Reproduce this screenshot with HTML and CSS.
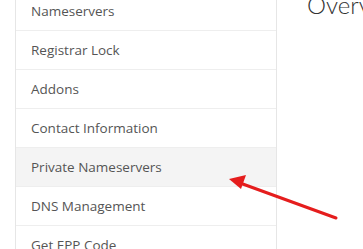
FILE: index.html
```html
<!DOCTYPE html>
<html lang="en">
<head>
  <meta charset="UTF-8" />
  <title>Domain Overview</title>
  <link rel="stylesheet" href="styles.css">
</head>
<body>
  <div class="page">
    <div class="sidebar">
      <a class="menu-item" href="#">Nameservers</a>
      <a class="menu-item" href="#">Registrar Lock</a>
      <a class="menu-item" href="#">Addons</a>
      <a class="menu-item" href="#">Contact Information</a>
      <a class="menu-item active" href="#">Private Nameservers</a>
      <a class="menu-item" href="#">DNS Management</a>
      <a class="menu-item" href="#">Get EPP Code</a>
    </div>
    <div class="main">
      <h1 class="title">Overview</h1>
    </div>
  </div>

  <svg class="arrow" width="363" height="249" viewBox="0 0 363 249">
    <line x1="336" y1="218" x2="240" y2="183" stroke="#e51d1d" stroke-width="3" stroke-linecap="round" />
    <polygon points="229,179 246,175 241,189" fill="#e51d1d" />
  </svg>
</body>
</html>
```

FILE: styles.css
```css
body {
  margin: 0;
  background: #fff;
  font-family: 'Open Sans', sans-serif;
  overflow: hidden;
}

.page {
  display: flex;
  margin-top: -8px;
}

.sidebar {
  width: 260px;
  margin-left: 15px;
  border-left: 1px solid #e6e6e6;
  border-right: 1px solid #e6e6e6;
  display: flex;
  flex-direction: column;
  flex-shrink: 0;
}

.menu-item {
  display: block;
  height: 38px;
  line-height: 38px;
  padding-left: 15px;
  border-bottom: 1px solid #eeeeee;
  color: #555;
  font-size: 13.5px;
  text-decoration: none;
}

.menu-item.active {
  background: #f4f4f4;
}

.main {
  padding-left: 30px;
}

.title {
  margin: 0;
  font-family: 'Lato', sans-serif;
  font-weight: 300;
  font-size: 24px;
  line-height: 28px;
  margin-top: -1px;
  color: #333;
  white-space: nowrap;
}

.arrow {
  position: absolute;
  top: 0;
  left: 0;
  pointer-events: none;
}
```
